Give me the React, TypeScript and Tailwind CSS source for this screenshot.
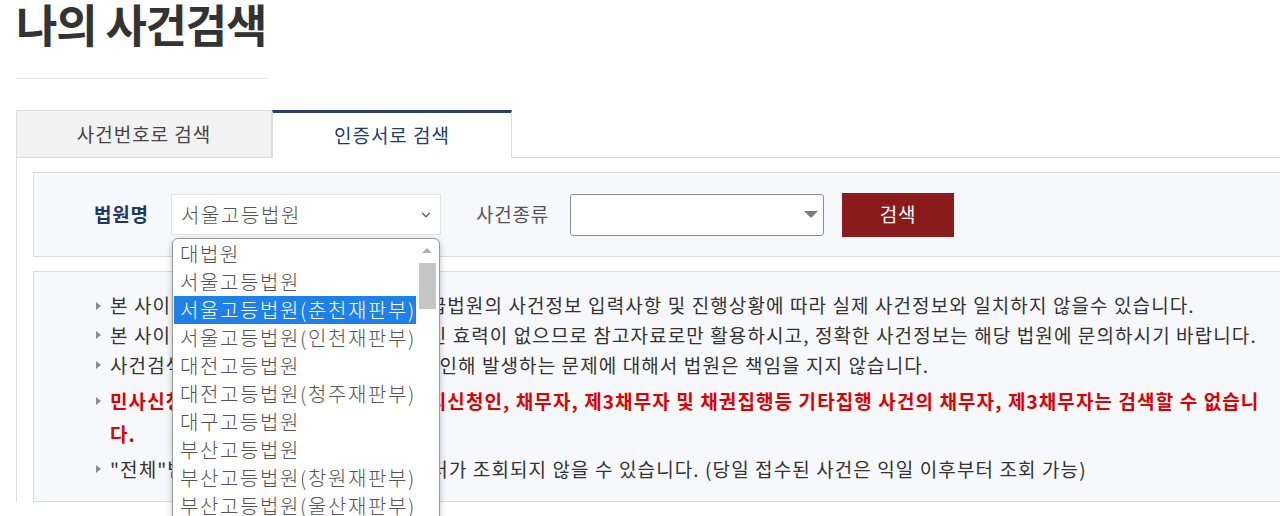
import { ChevronDown } from "lucide-react";

const FONT = { fontFamily: '"Noto Sans CJK KR", "Noto Sans", sans-serif' };

const COURTS = [
  "대법원",
  "서울고등법원",
  "서울고등법원(춘천재판부)",
  "서울고등법원(인천재판부)",
  "대전고등법원",
  "대전고등법원(청주재판부)",
  "대구고등법원",
  "부산고등법원",
  "부산고등법원(창원재판부)",
  "부산고등법원(울산재판부)",
  "광주고등법원",
];

function Bullet() {
  return <span className="mr-[9px] inline-block h-0 w-0 shrink-0 border-y-[4px] border-l-[5px] border-y-transparent border-l-[#8a8a8a]" />;
}

function CourtDropdown() {
  return (
    <div className="absolute left-[172px] top-[238px] flex h-[300px] w-[268px] rounded-t-[6px] border border-[#9a9a9a] bg-white p-[1px] shadow-[0_2px_6px_rgba(0,0,0,0.25)]">
      <ul className="w-[242px]">
        {COURTS.map((c, i) => (
          <li
            key={c}
            className={`flex h-[28px] items-center whitespace-nowrap pl-[6px] text-[20px] font-light tracking-[1.6px] ${
              i === 2 ? "bg-[#1f80ea] text-white" : "text-[#555]"
            }`}>
            {c}
          </li>
        ))}
      </ul>
      <div className="flex w-[22px] flex-col items-center">
        <span className="mt-[8px] h-0 w-0 border-x-[5px] border-b-[5px] border-x-transparent border-b-[#b0b0b0]" />
        <div className="mt-[10px] h-[46px] w-[17px] bg-[#c6c6c6]" />
      </div>
    </div>
  );
}

export default function App() {
  return (
    <div className="relative h-[516px] w-[1280px] overflow-hidden bg-white text-[#333]" style={FONT}>
      <div className="w-[1320px]">
        <h1 className="h-[48px] pl-[16px] text-[45px] font-bold leading-[48px] tracking-[-1.2px] text-[#333]">
          나의 사건검색
        </h1>
        <div className="ml-[16px] mt-[30px] h-px w-[252px] bg-[#e6e6e6]" />

        {/* 탭 */}
        <div className="ml-[16px] mt-[31px] flex border-b border-[#d6d6d6] text-[19px] tracking-[1px]">
          <div className="mb-[-1px] flex h-[48px] w-[256px] items-center justify-center border border-[#dcdcdc] bg-[#f2f2f2] text-[#444]">
            사건번호로 검색
          </div>
          <div className="mb-[-1px] flex h-[48px] w-[240px] items-center justify-center border-x border-t-[3px] border-x-[#dcdcdc] border-t-[#2a4266] bg-white text-[#1d3c6a]">
            인증서로 검색
          </div>
        </div>

        <div className="ml-[16px] border-l border-[#dcdcdc] pl-[16px] pt-[14px]">
          {/* 검색 조건 */}
          <div className="flex h-[85px] items-center border-b border-l border-t border-b-[#d9d9d9] border-l-[#e2e2e2] border-t-[#dcdcdc] border-t-dashed bg-[#f7f8fb] pl-[60px] text-[19px] tracking-[0.8px]">
            <span className="w-[55px] whitespace-nowrap font-bold text-[#1f3a60]">법원명</span>
            <div className="ml-[22px] flex h-[41px] w-[270px] items-center justify-between border border-[#e3e3e3] bg-white pl-[9px] pr-[7px]">
              <span className="text-[20px] font-light tracking-[1.6px] text-[#555]">서울고등법원</span>
              <ChevronDown size={14} strokeWidth={2} className="text-[#555]" />
            </div>
            <span className="ml-[35px] w-[74px] whitespace-nowrap text-[#555]">사건종류</span>
            <div className="ml-[20px] flex h-[42px] w-[254px] items-center justify-end rounded-[3px] border border-[#8f8f8f] bg-white pr-[5px]">
              <span className="h-0 w-0 border-x-[7px] border-t-[7px] border-x-transparent border-t-[#7a7a7a]" />
            </div>
            <button className="ml-[18px] h-[44px] w-[112px] bg-[#8b1b1b] text-white">검색</button>
          </div>

          {/* 안내 문구 */}
          <div className="mt-[14px] h-[231px] border border-[#dcdcdc] bg-[#f7f8fb] pl-[62px] pt-[19px] text-[19px] tracking-[1.1px] text-[#333]">
            <p className="flex h-[29px] items-center whitespace-nowrap">
              <Bullet />
              본 사이트에서 제공하는 사건정보는 각급법원의 사건정보 입력사항 및 진행상황에 따라 실제 사건정보와 일치하지 않을수 있습니다.
            </p>
            <p className="flex h-[30px] items-center whitespace-nowrap">
              <Bullet />
              본 사이트에서 제공된 사건정보는 법적인 효력이 없으므로 참고자료로만 활용하시고, 정확한 사건정보는 해당 법원에 문의하시기 바랍니다.
            </p>
            <p className="flex h-[30px] items-center whitespace-nowrap">
              <Bullet />
              사건검색 결과의 무단 배포 또는 변조로 인해 발생하는 문제에 대해서 법원은 책임을 지지 않습니다.
            </p>
            <div className="mt-[4px] flex">
              <span className="flex h-[33px] items-center self-start">
                <Bullet />
              </span>
              <p className="whitespace-nowrap font-bold leading-[33px] text-[#e00000]">
                민사신청사건(가압류, 가처분 등)에서 피신청인, 채무자, 제3채무자 및 채권집행등 기타집행 사건의 채무자, 제3채무자는 검색할 수 없습니
                <br />
                다.
              </p>
            </div>
            <p className="mt-[5px] flex h-[28px] items-center whitespace-nowrap">
              <Bullet />
              "전체"법원 검색시 접수된 사건은 데이터가 조회되지 않을 수 있습니다. (당일 접수된 사건은 익일 이후부터 조회 가능)
            </p>
          </div>
        </div>
      </div>

      <CourtDropdown />
    </div>
  );
}
